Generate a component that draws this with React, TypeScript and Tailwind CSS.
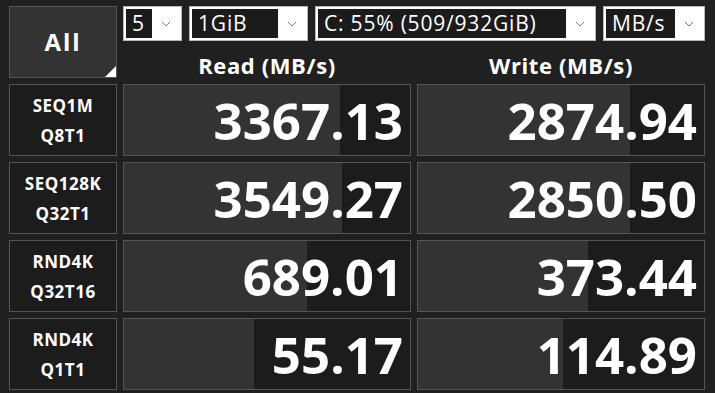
import { Fragment, ReactNode } from "react";

const rows = [
  { l1: "SEQ1M", l2: "Q8T1", read: "3367.13", readPct: 75.6, write: "2874.94", writePct: 74.3 },
  { l1: "SEQ128K", l2: "Q32T1", read: "3549.27", readPct: 76.3, write: "2850.50", writePct: 74 },
  { l1: "RND4K", l2: "Q32T16", read: "689.01", readPct: 64.1, write: "373.44", writePct: 59.4 },
  { l1: "RND4K", l2: "Q1T1", read: "55.17", readPct: 45.6, write: "114.89", writePct: 50.7 },
];

function Chevron() {
  return (
    <svg width="10" height="6" viewBox="0 0 10 6" fill="none">
      <path d="M1 1 L5 5 L9 1" stroke="#777" strokeWidth="1" />
    </svg>
  );
}

function Select({ value, width }: { value: string; width: string }) {
  return (
    <div className={`${width} h-[35px] flex border border-[#b8b8b8] bg-white p-[2px]`}>
      <div className="flex-1 bg-[#1b1b1b] text-white text-[21px] tracking-[0.8px] leading-none flex items-center pl-[6px] pb-[1px] overflow-hidden whitespace-nowrap">
        {value}
      </div>
      <div className="w-[27px] flex items-center justify-center">
        <Chevron />
      </div>
    </div>
  );
}

function ResultCell({ value, pct }: { value: string; pct: number }) {
  return (
    <div className="relative h-[72px] border border-[#555] bg-[#1c1c1c] overflow-hidden">
      <div className="absolute inset-y-0 left-0 bg-[#333]" style={{ width: `${pct}%` }} />
      <div className="relative h-full flex items-center justify-end pr-[7px] text-white font-bold text-[51px] leading-none">
        {value}
      </div>
    </div>
  );
}

function Label({ children }: { children: ReactNode }) {
  return (
    <div className="h-[72px] border border-[#555] bg-[#1c1c1c] flex flex-col items-center justify-center pt-[2px] text-white font-bold text-[17px] tracking-[0.5px] leading-[30px]">
      {children}
    </div>
  );
}

export default function App() {
  return (
    <div
      className="w-[715px] h-[393px] bg-[#202020] pl-[9px] pt-[6px] overflow-hidden"
      style={{ fontFamily: '"Open Sans", "Noto Sans", sans-serif' }}
    >
      {/* top: All button, selectors, column headers */}
      <div className="flex gap-[6px]">
        <div className="relative w-[108px] h-[72px] border border-[#555] bg-[#333] flex items-center justify-center text-white font-bold text-[24px] tracking-[2px] pb-[1px]">
          All
          <div className="absolute right-0 bottom-0 w-0 h-0 border-l-[11px] border-l-transparent border-b-[11px] border-b-white" />
        </div>
        <div className="w-[582px] h-[72px] flex flex-col">
          <div className="flex gap-[7px]">
            <Select value="5" width="w-[59px]" />
            <Select value="1GiB" width="w-[119px]" />
            <Select value="C: 55% (509/932GiB)" width="w-[281px]" />
            <Select value="MB/s" width="w-[102px]" />
          </div>
          <div className="flex-1 grid grid-cols-[288px_288px] gap-x-[6px] items-end pb-[2px] text-white font-bold text-[22px] tracking-[0.6px] leading-none">
            <div className="text-center">Read (MB/s)</div>
            <div className="text-center">Write (MB/s)</div>
          </div>
        </div>
      </div>

      {/* results */}
      <div className="mt-[6px] grid grid-cols-[108px_288px_288px] gap-[6px]">
        {rows.map((r, i) => (
          <Fragment key={i}>
            <Label>
              <span>{r.l1}</span>
              <span>{r.l2}</span>
            </Label>
            <ResultCell value={r.read} pct={r.readPct} />
            <ResultCell value={r.write} pct={r.writePct} />
          </Fragment>
        ))}
      </div>
    </div>
  );
}
